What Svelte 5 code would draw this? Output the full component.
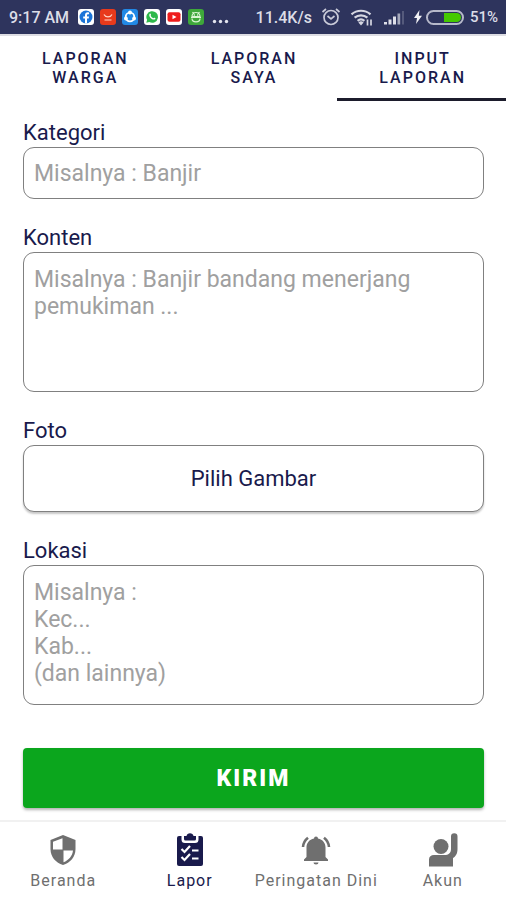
<script>
  let active = $state(2);
  const tabs = [
    ['Laporan', 'Warga'],
    ['Laporan', 'Saya'],
    ['Input', 'Laporan']
  ];
  let kategori = $state('');
  let konten = $state('');
  let lokasi = $state('');
</script>

<div class="app">
  <header class="status">
    <div class="left">
      <span class="time">9:17 AM</span>
      <svg class="chip" viewBox="0 0 16 16" aria-hidden="true">
        <rect width="16" height="16" rx="3" fill="#fff" />
        <circle cx="8" cy="8" r="6.5" fill="#1b74d8" />
        <path d="M7 14.5V9.6H5.2V7.5H7V6.2C7 4.3 8.1 3.3 9.8 3.3l1.3.1v1.9h-1c-.8 0-1.1.5-1.1 1.1v1.1h2L10.700 9.600H9v4.900z" fill="#fff" />
      </svg>
      <svg class="chip" viewBox="0 0 16 16" aria-hidden="true">
        <rect width="16" height="16" rx="3" fill="#e83a1c" />
        <path d="M4 5.500C5.500 8.700 10.500 8.700 12 5.500M4.500 11h7" fill="none" stroke="#ffd5c8" stroke-width="1.200" />
      </svg>
      <svg class="chip" viewBox="0 0 16 16" aria-hidden="true">
        <rect width="16" height="16" rx="3" fill="#2289e6" />
        <circle cx="8" cy="8" r="4.300" fill="none" stroke="#fff" stroke-width="1.800" />
        <circle cx="8" cy="3.600" r="2" fill="#fff" />
        <circle cx="3.900" cy="9.500" r="1.900" fill="#fff" />
        <circle cx="12.100" cy="9.500" r="1.900" fill="#fff" />
      </svg>
      <svg class="chip" viewBox="0 0 16 16" aria-hidden="true">
        <rect width="16" height="16" rx="3" fill="#fff" />
        <path d="M2.300 13.800l.8-3A5.800 5.800 0 1 1 5.300 13z" fill="#2eb84b" />
        <path d="M5.600 4.900c.6-.6 1-.3 1.300.6.3.7 0 .9-.3 1.300.6 1.200 1.500 2 2.700 2.500.5-.5.700-.9 1.300-.5 1 .5 1.100.7.5 1.400-1.900 1.800-7.300-2.700-5.500-5.300z" fill="#fff" />
      </svg>
      <svg class="chip" viewBox="0 0 16 16" aria-hidden="true">
        <rect width="16" height="16" rx="3" fill="#fff" />
        <rect x="1.500" y="3.300" width="13" height="9.400" rx="2" fill="#ee1c1c" />
        <path d="M6.500 5.700v4.600L10.500 8z" fill="#fff" />
      </svg>
      <svg class="chip" viewBox="0 0 16 16" aria-hidden="true">
        <rect width="16" height="16" rx="3" fill="#3ea83a" />
        <path d="M4 7.500a4 4 0 0 1 8 0zM4.500 3l1.500 2M11.500 3L10 5M3 8.500h10M4 9.500c0 4.500 8 4.500 8 0" fill="none" stroke="#d9f5d2" stroke-width="1.200" />
        <circle cx="6.300" cy="6" r=".7" fill="#fff" /><circle cx="9.700" cy="6" r=".7" fill="#fff" />
      </svg>
      <svg class="dots" viewBox="0 0 17 16" aria-hidden="true">
        <g fill="#e4e5ee"><circle cx="2.500" cy="12.500" r="1.700" /><circle cx="8.500" cy="12.500" r="1.700" /><circle cx="14.500" cy="12.500" r="1.700" /></g>
      </svg>
    </div>
    <div class="right">
      <span class="speed">11.4K/s</span>
      <svg width="20" height="20" viewBox="0 0 20 20" fill="none" stroke="#c9cad8" stroke-width="1.700" aria-hidden="true">
        <circle cx="10" cy="10.500" r="7" /><path d="M1.500 5L5 2M18.500 5L15 2M6.500 9l3.500 2.800L13.500 9" />
      </svg>
      <svg width="24" height="20" viewBox="0 0 24 20" aria-hidden="true">
        <g fill="none" stroke="#d5d6e1" stroke-width="2.200"><path d="M1.500 7.300a14.500 14.500 0 0 1 19 0M4.600 10.700a9.800 9.800 0 0 1 12.800 0M7.600 13.900a5.300 5.300 0 0 1 6.800 0" /></g>
        <path d="M11 18.500l-2.600-3a3.700 3.700 0 0 1 5.200 0z" fill="#d5d6e1" />
        <path d="M17.500 12.500v6M21 12.500v6" stroke="#d5d6e1" stroke-width="1.700" />
      </svg>
      <svg width="22" height="20" viewBox="0 0 22 20" aria-hidden="true">
        <path d="M1 15h3v2.500H1zM5.500 12.500h3v5h-3zM10 9.500h3v8h-3z" fill="#dfe0e9" />
        <path d="M14.500 6.500h2.700v11h-2.700z" fill="#a5a8bb" /><path d="M19 4h2v13.500h-2z" fill="#555a7c" />
      </svg>
      <svg class="battery" width="51" height="20" viewBox="0 0 51 20" aria-hidden="true">
        <path d="M5.500 3L0 11h3l-1 6 6-8.300H4.800z" fill="#f2f2f6" />
        <rect x="13" y="4" width="36" height="13" rx="6.500" fill="none" stroke="#b7b9ca" stroke-width="2" />
        <path d="M30 6h12.500a4.500 4.500 0 0 1 0 9H30z" fill="#45c900" />
      </svg>
      <span class="percent">51%</span>
    </div>
  </header>

  <div class="tabs" role="tablist">
    {#each tabs as [first, second], i}
      <button type="button" role="tab" class="tab" class:active={active === i} aria-selected={active === i} onclick={() => (active = i)}>
        {first}<br />{second}
      </button>
    {/each}
  </div>

  <form onsubmit={(e) => e.preventDefault()}>
    <div class="field">
      <label for="kategori">Kategori</label>
      <input id="kategori" type="text" placeholder="Misalnya : Banjir" bind:value={kategori} />
    </div>
    <div class="field">
      <label for="konten">Konten</label>
      <textarea id="konten" placeholder="Misalnya : Banjir bandang menerjang pemukiman ..." bind:value={konten}></textarea>
    </div>
    <div class="field">
      <label for="foto">Foto</label>
      <button id="foto" type="button" class="pick">Pilih Gambar</button>
    </div>
    <div class="field">
      <label for="lokasi">Lokasi</label>
      <textarea id="lokasi" placeholder={'Misalnya :\nKec...\nKab...\n(dan lainnya)'} bind:value={lokasi}></textarea>
    </div>
    <button type="submit" class="send">KIRIM</button>
  </form>

  <nav>
    <a href="#beranda">
      <svg viewBox="0 0 36 36" aria-hidden="true">
        <path d="M18 3L5.500 8v9c0 8 5.300 13.700 12.500 16 7.200-2.300 12.500-8 12.500-16V8z" fill="currentColor" />
        <path d="M17.500 6.200v11.300H8V9.700zM18.500 18.500H28c-.6 5.500-4.200 9.800-9.500 11.700z" fill="#fff" />
      </svg>
      <span>Beranda</span>
    </a>
    <a href="#lapor" class="current" aria-current="page">
      <svg viewBox="0 0 36 36" aria-hidden="true">
        <path d="M7 4h22a2 2 0 0 1 2 2v26a2 2 0 0 1-2 2H7a2 2 0 0 1-2-2V6a2 2 0 0 1 2-2z" fill="currentColor" />
        <path d="M9.500 3.500h17v4a3.500 3.500 0 0 1-3.500 3.500H13a3.500 3.500 0 0 1-3.500-3.500z" fill="#fff" />
        <path d="M12 4h2.500a3.600 3.600 0 0 1 7 0H24v3a1.500 1.500 0 0 1-1.500 1.500h-9A1.500 1.500 0 0 1 12 7z" fill="currentColor" />
        <path d="M9.500 17l3 3 5.500-6M9.500 25l3 3 5.500-6M20 18.500h6.500M20 26.500h6.500" fill="none" stroke="#fff" stroke-width="2.200" />
      </svg>
      <span>Lapor</span>
    </a>
    <a href="#peringatan">
      <svg viewBox="0 0 36 36" aria-hidden="true">
        <path d="M16 6.500a2 2 0 0 1 4 0c4.800 1 7.500 4.500 7.500 9V25l2.500 2.500V29h-24v-1.500L8.500 25v-9.500c0-4.500 2.700-8 7.500-9z" fill="currentColor" />
        <path d="M15.500 30.500h5a2.500 2 0 0 1-5 0z" fill="currentColor" />
        <path d="M5 15c.3-4 2-7 5-9.300M31 15c-.3-4-2-7-5-9.300" fill="none" stroke="currentColor" stroke-width="2.600" />
      </svg>
      <span>Peringatan Dini</span>
    </a>
    <a href="#akun">
      <svg viewBox="0 0 36 36" aria-hidden="true">
        <circle cx="16" cy="14.500" r="7.500" fill="currentColor" />
        <path d="M4 34.500v-7c0-3 2-4.500 5-4.500h10.500c4 0 6.500-2 6.500-6V4.500a3 3 0 0 1 6.500 0V17c0 5-2 7.500-4.500 9v8.500z" fill="currentColor" />
      </svg>
      <span>Akun</span>
    </a>
  </nav>
</div>

<style>
  :global(body) {
    margin: 0;
    background: #fff;
  }
  .app {
    min-height: 100vh;
    display: flex;
    flex-direction: column;
    font-family: Roboto, 'Liberation Sans', sans-serif;
    color: #191a4c;
  }
  button, input, textarea {
    font: inherit;
    color: inherit;
    box-sizing: border-box;
    margin: 0;
  }
  .status {
    display: flex;
    justify-content: space-between;
    align-items: center;
    height: 34px;
    padding: 0 8px 0 9px;
    background: #2e345d;
    border-bottom: 2px solid #dddde3;
    color: #dcdde7;
    font-size: 16px;
    font-weight: 500;
  }
  .left, .right {
    display: flex;
    align-items: center;
  }
  .left {
    gap: 6px;
  }
  .right {
    gap: 9px;
  }
  .time {
    margin-right: 3px;
  }
  .chip {
    width: 16px;
    height: 16px;
  }
  .dots {
    width: 17px;
    height: 16px;
    margin-left: 2px;
  }
  .percent {
    margin-left: -4px;
    font-size: 15px;
  }
  .tabs {
    display: grid;
    grid-template-columns: repeat(3, 1fr);
  }
  .tab {
    padding: 13px 0 11px 2px;
    border: 0;
    border-bottom: 3px solid transparent;
    background: none;
    font-size: 16px;
    font-weight: 500;
    line-height: 19px;
    letter-spacing: 2px;
    text-transform: uppercase;
  }
  .tab.active {
    border-bottom-color: #1c1c2c;
  }
  form {
    flex: 1;
    display: flex;
    flex-direction: column;
    gap: 27px;
    padding: 20px 22px 12px 23px;
  }
  .field {
    display: flex;
    flex-direction: column;
  }
  label {
    padding-bottom: 2px;
    font-size: 22px;
    line-height: 24px;
  }
  input, textarea, .pick {
    width: 100%;
    border: 1px solid #808080;
    border-radius: 11px;
    background: #fff;
    font-size: 23px;
    line-height: 27px;
  }
  input {
    height: 52px;
    padding: 0 10px;
  }
  textarea {
    display: block;
    height: 140px;
    padding: 13px 10px;
    resize: none;
    overflow: hidden;
  }
  input::placeholder, textarea::placeholder {
    color: #a0a0a0;
    opacity: 1;
  }
  .pick {
    height: 67px;
    font-size: 22px;
    box-shadow: 0 2px 2px rgba(0, 0, 0, 0.22);
  }
  .send {
    height: 60px;
    margin-top: 16px;
    border: 0;
    border-radius: 4px;
    background: #0ba61d;
    box-shadow: 0 2px 3px rgba(0, 0, 0, 0.3);
    color: #fff;
    font-size: 23px;
    font-weight: 900;
    letter-spacing: 2px;
  }
  nav {
    display: grid;
    grid-template-columns: repeat(4, 1fr);
    height: 78px;
    border-top: 2px solid #f1f1f1;
  }
  nav a {
    display: flex;
    flex-direction: column;
    align-items: center;
    padding-top: 10px;
    color: #6f6f6f;
    font-size: 16px;
    line-height: 20px;
    letter-spacing: 1px;
    text-decoration: none;
    white-space: nowrap;
  }
  nav a.current {
    color: #191a4c;
  }
  nav svg {
    width: 36px;
    height: 36px;
    margin-bottom: 3px;
  }
</style>
